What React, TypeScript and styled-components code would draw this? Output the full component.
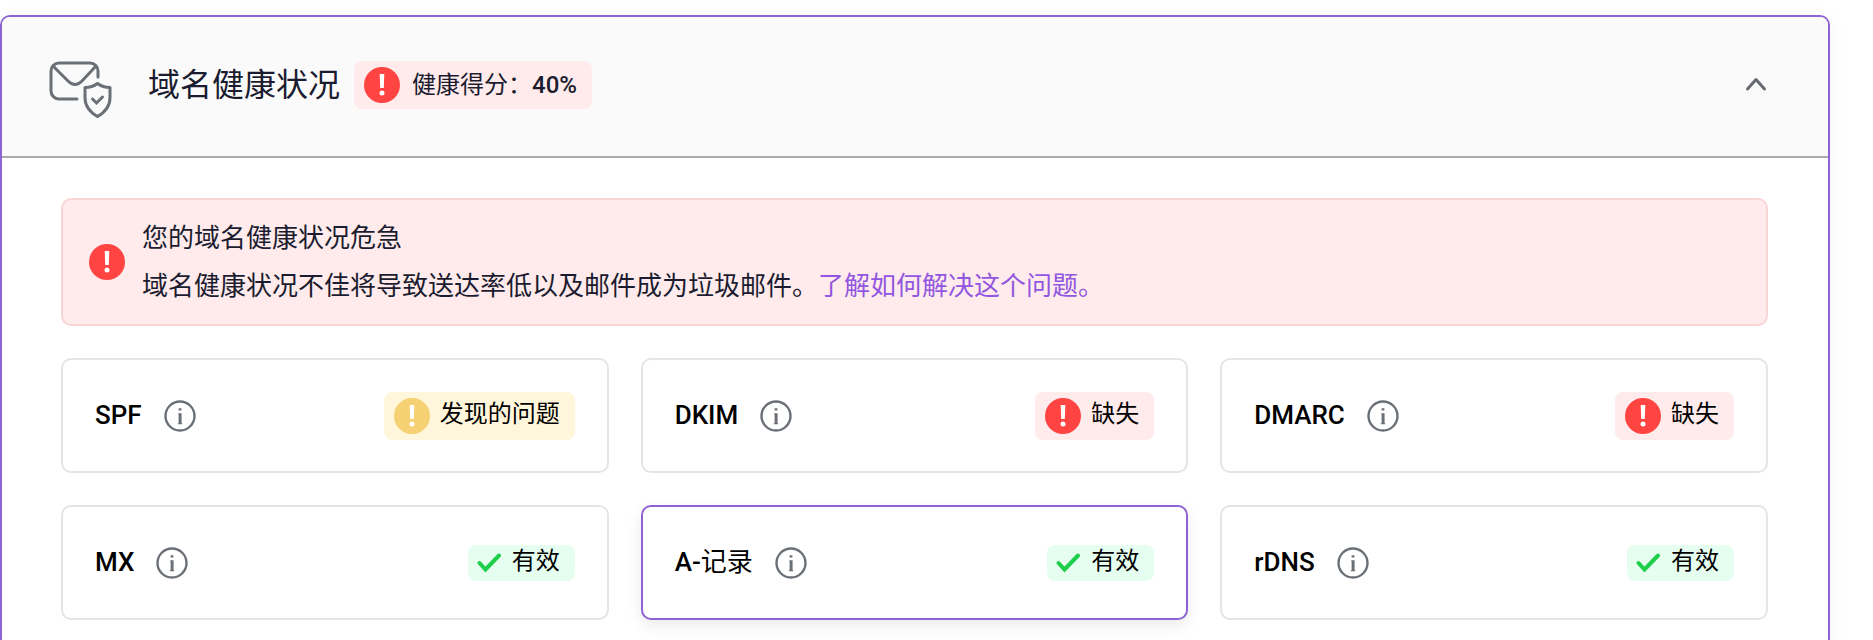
import React from "react";
import styled, { createGlobalStyle, css } from "styled-components";

const GlobalStyle = createGlobalStyle`
  *, *::before, *::after { box-sizing: border-box; }
  body {
    margin: 0;
    background: #fff;
    color: #1b1c30;
    font-family: Roboto, "Noto Sans CJK SC", sans-serif;
    overflow-x: hidden;
  }
  h2, p, ul { margin: 0; padding: 0; }
`;

type Tone = "critical" | "warning" | "valid";

const toneBackground: Record<Tone, string> = {
  critical: "#ffebeb",
  warning: "#fff6dc",
  valid: "#e6fef0",
};

const Page = styled.main`
  padding: 15px 43px 0 0;
`;

const Panel = styled.section`
  border: 2px solid #8d62d2;
  border-radius: 10px;
  box-shadow: 0 4px 20px rgba(0, 0, 0, 0.05);
  overflow: hidden;
  padding-bottom: 40px;
`;

const PanelHeader = styled.header`
  display: flex;
  align-items: center;
  height: 141px;
  padding: 0 56px 4px 44px;
  background: #fafafa;
  border-bottom: 2px solid #a9a9ac;
`;

const Title = styled.h2`
  margin: 0 14px 0 34px;
  font-size: 32px;
  font-weight: 400;
  line-height: 48px;
`;

const ToggleButton = styled.button`
  display: flex;
  margin-left: auto;
  padding: 0;
  border: 0;
  background: none;
  color: #676a71;
  cursor: pointer;
`;

const PanelBody = styled.div`
  display: grid;
  gap: 32px;
  padding: 40px 60px 0 59px;
`;

const Alert = styled.div`
  display: flex;
  align-items: center;
  gap: 17px;
  padding: 14px 26px;
  border: 2px solid #f9d5d6;
  border-radius: 10px;
  background: #ffebeb;
`;

const AlertText = styled.p`
  font-size: 26px;
  line-height: 48px;
`;

const AlertLink = styled.a`
  color: #9256e0;
  text-decoration: none;
`;

const CardGrid = styled.ul`
  display: grid;
  grid-template-columns: repeat(3, 1fr);
  gap: 32px;
  list-style: none;
`;

const Card = styled.li<{ $active?: boolean }>`
  display: flex;
  align-items: center;
  height: 115px;
  padding: 0 32px;
  border: 2px solid #e5e5e7;
  border-radius: 10px;
  background: #fff;
  color: #000;
  ${({ $active }) =>
    $active &&
    css`
      border-color: #8d62d2;
      box-shadow: 0 6px 16px rgba(0, 0, 0, 0.08);
    `}
`;

const RecordName = styled.span`
  padding-bottom: 2px;
  font-size: 26px;
  font-weight: 500;
  line-height: 36px;
`;

const LightText = styled.span`
  font-weight: 400;
`;

const InfoButton = styled.button`
  display: flex;
  margin: 0 auto 0 22px;
  padding: 0;
  border: 0;
  background: none;
  cursor: pointer;
`;

const Badge = styled.span<{ $tone: Tone }>`
  display: inline-flex;
  align-items: center;
  gap: 10px;
  min-height: 36px;
  padding: ${({ $tone }) => ($tone === "valid" ? "0 15px 0 8px" : "6px 15px 6px 10px")};
  border-radius: 8px;
  background: ${({ $tone }) => toneBackground[$tone]};
  white-space: nowrap;
`;

const ScoreBadge = styled(Badge)`
  gap: 12px;
`;

const BadgeText = styled.span`
  padding-bottom: 4px;
  font-size: 24px;
  line-height: 32px;
`;

const ScoreText = styled(BadgeText)`
  padding: 0;
`;

const ScoreValue = styled.span`
  font-weight: 500;
`;

const Glyph = styled.svg`
  display: block;
  flex: none;
`;

const MailShieldIcon = () => (
  <Glyph width="68" height="66" viewBox="0 -6 68 66" fill="none" stroke="#6b7077" strokeWidth="3" aria-hidden="true">
    <path d="M31 41H13a8 8 0 0 1-8-8V13a8 8 0 0 1 8-8h31a8 8 0 0 1 8 8v6" strokeLinecap="round" />
    <path d="M7 8l15 15c4.500 4.500 9.500 4.500 14 0L50 8" />
    <path d="M51.500 25.500c4 3 8 4 12.500 4v10c0 8-4.500 14.500-12.500 19-8-4.500-12.500-11-12.500-19v-10c4.500 0 8.500-1 12.500-4z" strokeLinejoin="round" />
    <path d="M46.500 41l4 4 6-6" strokeLinecap="round" />
  </Glyph>
);

const ExclamationIcon = ({ color }: { color: string }) => (
  <Glyph width="36" height="36" viewBox="0 0 36 36" aria-hidden="true">
    <circle cx="18" cy="18" r="18" fill={color} />
    <path d="M15.700 7h4.600l-.5 14h-3.600z" fill="#fff" />
    <circle cx="18" cy="26" r="2.500" fill="#fff" />
  </Glyph>
);

const CheckIcon = () => (
  <Glyph width="26" height="24" viewBox="0 0 26 24" fill="none" aria-hidden="true">
    <path d="M3.500 12l6 6.500L23 4.500" stroke="#1fce4a" strokeWidth="4" strokeLinecap="round" />
  </Glyph>
);

const InfoIcon = () => (
  <Glyph width="32" height="32" viewBox="0 0 32 32" aria-hidden="true">
    <circle cx="16" cy="16" r="14.500" fill="none" stroke="#6b7077" strokeWidth="2.400" />
    <path d="M14.600 8.200h2.800v2.400h-2.800zM14.200 13.200h3.400v10h.6v1h-4.400v-1h.8v-9h-.4z" fill="#6b7077" />
  </Glyph>
);

const ChevronUpIcon = () => (
  <Glyph width="32" height="32" viewBox="0 0 32 32" fill="none" stroke="currentColor" strokeWidth="3" aria-hidden="true">
    <path d="M7.500 20L16 10.500l8.500 9.500" strokeLinecap="round" strokeLinejoin="round" />
  </Glyph>
);

const toneIcon: Record<Tone, React.ReactNode> = {
  critical: <ExclamationIcon color="#ff4442" />,
  warning: <ExclamationIcon color="#f6d173" />,
  valid: <CheckIcon />,
};

interface DnsRecord {
  id: string;
  name: React.ReactNode;
  tone: Tone;
  status: string;
  active?: boolean;
}

const records: DnsRecord[] = [
  { id: "SPF", name: "SPF", tone: "warning", status: "发现的问题" },
  { id: "DKIM", name: "DKIM", tone: "critical", status: "缺失" },
  { id: "DMARC", name: "DMARC", tone: "critical", status: "缺失" },
  { id: "MX", name: "MX", tone: "valid", status: "有效" },
  { id: "A", name: <>A-<LightText>记录</LightText></>, tone: "valid", status: "有效", active: true },
  { id: "rDNS", name: "rDNS", tone: "valid", status: "有效" },
];

export default function App() {
  const [open, setOpen] = React.useState(true);

  return (
    <Page lang="zh-CN">
      <GlobalStyle />
      <Panel>
        <PanelHeader>
          <MailShieldIcon />
          <Title>域名健康状况</Title>
          <ScoreBadge $tone="critical">
            {toneIcon.critical}
            <ScoreText>
              健康得分：<ScoreValue>40%</ScoreValue>
            </ScoreText>
          </ScoreBadge>
          <ToggleButton type="button" aria-expanded={open} aria-label="域名健康状况" onClick={() => setOpen(!open)}>
            <ChevronUpIcon />
          </ToggleButton>
        </PanelHeader>
        {open && (
          <PanelBody>
            <Alert role="alert">
              {toneIcon.critical}
              <div>
                <AlertText>您的域名健康状况危急</AlertText>
                <AlertText>
                  域名健康状况不佳将导致送达率低以及邮件成为垃圾邮件。
                  <AlertLink href="#fix">了解如何解决这个问题。</AlertLink>
                </AlertText>
              </div>
            </Alert>
            <CardGrid>
              {records.map((record) => (
                <Card key={record.id} $active={record.active}>
                  <RecordName>{record.name}</RecordName>
                  <InfoButton type="button" aria-label={record.id}>
                    <InfoIcon />
                  </InfoButton>
                  <Badge $tone={record.tone}>
                    {toneIcon[record.tone]}
                    <BadgeText>{record.status}</BadgeText>
                  </Badge>
                </Card>
              ))}
            </CardGrid>
          </PanelBody>
        )}
      </Panel>
    </Page>
  );
}
